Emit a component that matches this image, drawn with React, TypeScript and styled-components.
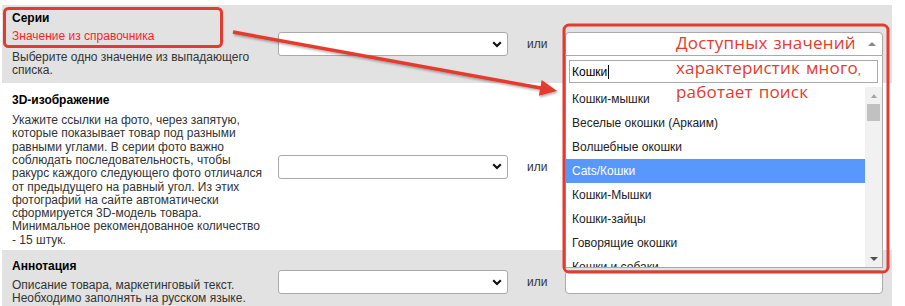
import React from "react";
import styled, { createGlobalStyle } from "styled-components";

const GlobalStyle = createGlobalStyle`
  html, body {
    margin: 0;
    padding: 0;
    background: #fff;
  }
  body {
    font-family: "Liberation Sans", Arial, sans-serif;
    font-size: 12px;
    color: #333;
  }
`;

const Page = styled.div`
  position: relative;
  width: 905px;
  height: 306px;
  overflow: hidden;
  box-sizing: border-box;
  padding: 5px 0 0 2px;
`;

const Table = styled.div`
  width: 890px;
`;

const Row = styled.div<{ $gray?: boolean }>`
  display: grid;
  grid-template-columns: 276px 230px 57px 318px 9px;
  align-items: center;
  background: ${(p) => (p.$gray ? "#e2e2e2" : "#fff")};
`;

const Info = styled.div<{ $top: number; $bottom: number }>`
  align-self: start;
  padding: ${(p) => p.$top}px 10px ${(p) => p.$bottom}px;
`;

const Title = styled.div`
  font-weight: bold;
  color: #000;
  line-height: 14px;
`;

const Source = styled.div`
  color: #ff1f1f;
  line-height: 14px;
  margin-top: 3.5px;
`;

const Hint = styled.div<{ $gap: number }>`
  margin-top: ${(p) => p.$gap}px;
  line-height: 13.3px;
  white-space: pre;
  color: #333;
`;

const Select = styled.div`
  height: 24px;
  box-sizing: border-box;
  border: 1px solid #a9a9a9;
  border-radius: 3px;
  background: #fff;
  display: flex;
  align-items: center;
  justify-content: flex-end;
  padding-right: 5px;
`;

const Or = styled.div`
  padding-left: 19px;
  color: #333;
`;

const Field = styled.div`
  position: relative;
  z-index: 2;
`;

const Input = styled.div`
  height: 24px;
  box-sizing: border-box;
  border: 1px solid #aaa;
  border-radius: 4px;
  background: #fff;
`;

const ComboBox = styled.div`
  height: 24px;
  box-sizing: border-box;
  border: 1px solid #aaa;
  border-radius: 4px 4px 0 0;
  background: #fff;
  display: flex;
  align-items: center;
  justify-content: flex-end;
  padding-right: 6px;
`;

const ArrowUp = styled.span<{ $color: string; $half?: number }>`
  width: 0;
  height: 0;
  border-left: ${(p) => p.$half ?? 4}px solid transparent;
  border-right: ${(p) => p.$half ?? 4}px solid transparent;
  border-bottom: 4px solid ${(p) => p.$color};
`;

const ArrowDown = styled.span<{ $color: string }>`
  width: 0;
  height: 0;
  border-left: 4px solid transparent;
  border-right: 4px solid transparent;
  border-top: 4px solid ${(p) => p.$color};
`;

const Dropdown = styled.div`
  position: absolute;
  top: 100%;
  left: 0;
  right: 0;
  background: #fff;
  border: 1px solid #aaa;
  border-top: none;
`;

const SearchWrap = styled.div`
  padding: 4px 4px 4px 3px;
`;

const Search = styled.div`
  height: 23px;
  box-sizing: border-box;
  border: 1px solid #aaa;
  padding-left: 2px;
  display: flex;
  align-items: center;
  color: #000;
`;

const Caret = styled.span`
  display: inline-block;
  width: 1px;
  height: 14px;
  margin-left: 1px;
  background: #000;
`;

const ListWrap = styled.div`
  display: flex;
  height: 180px;
`;

const List = styled.div`
  flex: 1;
  overflow: hidden;
`;

const Option = styled.div<{ $active?: boolean }>`
  height: 24px;
  line-height: 24px;
  padding-left: 6px;
  white-space: nowrap;
  color: ${(p) => (p.$active ? "#fff" : "#222")};
  background: ${(p) => (p.$active ? "#5897fb" : "transparent")};
`;

const Scrollbar = styled.div`
  width: 17px;
  background: #f1f1f1;
  display: flex;
  flex-direction: column;
  align-items: center;
`;

const ScrollBtn = styled.div`
  height: 17px;
  width: 17px;
  display: flex;
  align-items: center;
  justify-content: center;
`;

const Thumb = styled.div`
  width: 13px;
  height: 17px;
  background: #c1c1c1;
`;

const Spacer = styled.div`
  flex: 1;
`;

const Overlay = styled.svg`
  position: absolute;
  left: 0;
  top: 0;
  pointer-events: none;
  z-index: 5;
  overflow: visible;
`;

const Note = styled.div`
  position: absolute;
  left: 676px;
  top: 32px;
  z-index: 6;
  font-family: "Comic Sans MS", "Comic Neue", "Open Sans", sans-serif;
  font-size: 17px;
  letter-spacing: 0.2px;
  line-height: 24.5px;
  color: #e53a2f;
  white-space: pre;
`;

const Chevron = () => (
  <svg width="10" height="7" viewBox="0 0 10 7">
    <path d="M1.2 1.2 L5 5 L8.8 1.2" fill="none" stroke="#111" strokeWidth="2.2" />
  </svg>
);

const options = [
  "Кошки-мышки",
  "Веселые окошки (Аркаим)",
  "Волшебные окошки",
  "Cats/Кошки",
  "Кошки-Мышки",
  "Кошки-зайцы",
  "Говорящие окошки",
  "Кошки и собаки",
];

export default function App() {
  // arrow from the "Серии" frame to the combo box
  const tip = { x: 557, y: 91 };
  const from = { x: 233, y: 32 };
  const len = Math.hypot(tip.x - from.x, tip.y - from.y);
  const d = { x: (tip.x - from.x) / len, y: (tip.y - from.y) / len };
  const n = { x: -d.y, y: d.x };
  const base = { x: tip.x - d.x * 17, y: tip.y - d.y * 17 };
  const w1 = { x: base.x + n.x * 8, y: base.y + n.y * 8 };
  const w2 = { x: base.x - n.x * 8, y: base.y - n.y * 8 };

  return (
    <>
      <GlobalStyle />
      <Page>
        <Table>
          <Row $gray>
            <Info $top={6} $bottom={6}>
              <Title>Серии</Title>
              <Source>Значение из справочника</Source>
              <Hint $gap={8}>{"Выберите одно значение из выпадающего\nсписка."}</Hint>
            </Info>
            <Select>
              <Chevron />
            </Select>
            <Or>или</Or>
            <Field>
              <ComboBox>
                <ArrowUp $color="#888" />
              </ComboBox>
              <Dropdown>
                <SearchWrap>
                  <Search>
                    Кошки
                    <Caret />
                  </Search>
                </SearchWrap>
                <ListWrap>
                  <List>
                    {options.map((o) => (
                      <Option key={o} $active={o === "Cats/Кошки"}>
                        {o}
                      </Option>
                    ))}
                  </List>
                  <Scrollbar>
                    <ScrollBtn>
                      <ArrowUp $color="#a3a3a3" $half={3.5} />
                    </ScrollBtn>
                    <Thumb />
                    <Spacer />
                    <ScrollBtn>
                      <ArrowDown $color="#505050" />
                    </ScrollBtn>
                  </Scrollbar>
                </ListWrap>
              </Dropdown>
            </Field>
            <div />
          </Row>
          <Row>
            <Info $top={10} $bottom={3}>
              <Title>3D-изображение</Title>
              <Hint $gap={7}>
                {"Укажите ссылки на фото, через запятую,\nкоторые показывает товар под разными\nравными углами. В серии фото важно\nсоблюдать последовательность, чтобы\nракурс каждого следующего фото отличался\nот предыдущего на равный угол. Из этих\nфотографий на сайте автоматически\nсформируется 3D-модель товара.\nМинимальное рекомендованное количество\n- 15 штук."}
              </Hint>
            </Info>
            <Select>
              <Chevron />
            </Select>
            <Or>или</Or>
            <Input />
            <div />
          </Row>
          <Row $gray>
            <Info $top={9} $bottom={9}>
              <Title>Аннотация</Title>
              <Hint $gap={6}>
                {"Описание товара, маркетинговый текст.\nНеобходимо заполнять на русском языке."}
              </Hint>
            </Info>
            <Select>
              <Chevron />
            </Select>
            <Or>или</Or>
            <Input />
            <div />
          </Row>
        </Table>

        <Overlay width="905" height="306" viewBox="0 0 905 306">
          <defs>
            <filter id="sh" x="-5%" y="-50%" width="110%" height="200%">
              <feDropShadow dx="1" dy="1.5" stdDeviation="1" floodColor="#000" floodOpacity="0.35" />
            </filter>
          </defs>
          <rect x="4.5" y="8.5" width="217" height="38" rx="4" fill="none" stroke="#e53a2f" strokeWidth="3" />
          <rect x="564" y="25" width="324" height="247" rx="5" fill="none" stroke="#e53a2f" strokeWidth="3" />
          <g filter="url(#sh)">
            <line x1={from.x} y1={from.y} x2={base.x + d.x * 2} y2={base.y + d.y * 2} stroke="#e53a2f" strokeWidth="3.5" />
            <polygon points={`${tip.x},${tip.y} ${w1.x},${w1.y} ${w2.x},${w2.y}`} fill="#e53a2f" />
          </g>
        </Overlay>
        <Note>{"Доступных значений\nхарактеристик много,\nработает поиск"}</Note>
      </Page>
    </>
  );
}
